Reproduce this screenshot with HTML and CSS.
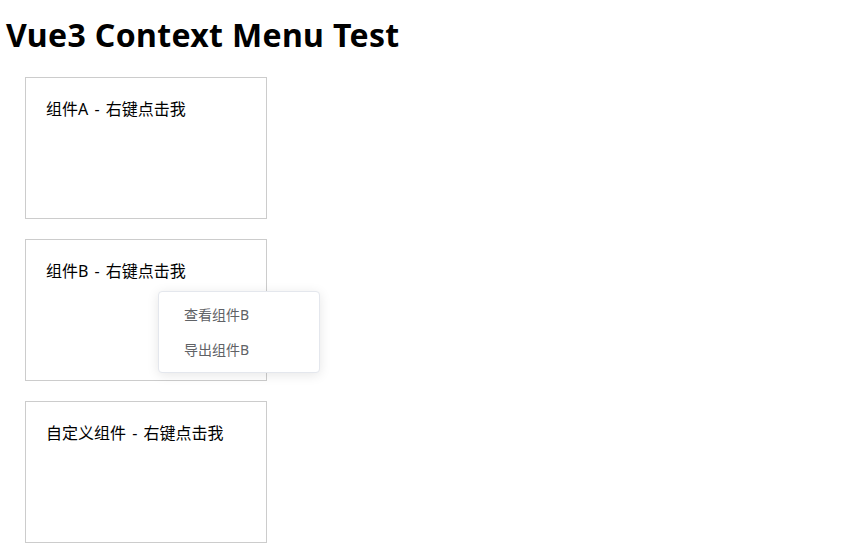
FILE: index.html
```html
<!DOCTYPE html>
<html lang="zh-CN">
<head>
<meta charset="utf-8">
<title>Vue3 Context Menu Test</title>
<link rel="stylesheet" href="styles.css">
</head>
<body>
<div class="app">
  <h1 class="title">Vue3 Context Menu Test</h1>
  <div class="list">
    <div class="box">组件A - 右键点击我</div>
    <div class="box box-b">组件B - 右键点击我
      <div class="menu">
        <div class="menu-item">查看组件B</div>
        <div class="menu-item">导出组件B</div>
      </div>
    </div>
    <div class="box">自定义组件 - 右键点击我</div>
  </div>
</div>
</body>
</html>
```

FILE: styles.css
```css
html, body {
  margin: 0;
  padding: 0;
  background: #fff;
}
body {
  font-family: "Noto Sans", "Noto Sans CJK SC", sans-serif;
  color: #000;
}
.app {
  padding: 0 0 0 6px;
}
.title {
  margin: 0;
  padding-top: 14px;
  font-size: 32px;
  font-weight: 700;
  line-height: 42px;
  letter-spacing: 0.35px;
}
.list {
  padding: 21px 0 0 19px;
  display: flex;
  flex-direction: column;
  gap: 20px;
}
.box {
  position: relative;
  width: 200px;
  height: 100px;
  padding: 20px;
  border: 1px solid #ccc;
  font-size: 16px;
  line-height: 22px;
  word-spacing: 2px;
}
.menu {
  position: absolute;
  left: 132px;
  top: 51px;
  width: 160px;
  padding: 5px 0;
  background: #fff;
  border: 1px solid #e4e7ed;
  border-radius: 4px;
  box-shadow: 0 2px 12px rgba(0, 0, 0, 0.1);
  z-index: 10;
  word-spacing: 0;
}
.menu-item {
  height: 35px;
  line-height: 35px;
  padding: 0 25px;
  font-size: 14px;
  color: #606266;
}
```
